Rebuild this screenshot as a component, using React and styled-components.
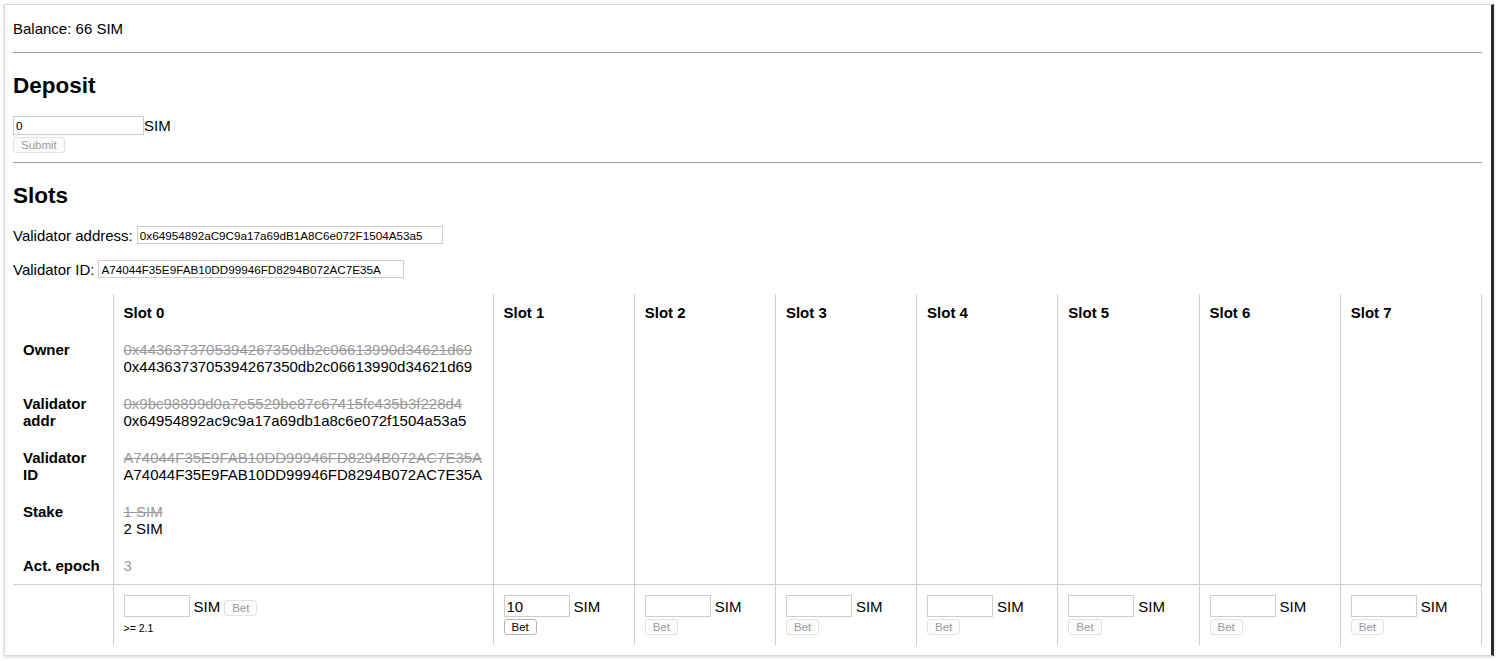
import React from "react";
import styled, { createGlobalStyle } from "styled-components";

const GlobalStyle = createGlobalStyle`
  html, body {
    margin: 0;
    padding: 0;
    background: #fff;
    overflow: hidden;
  }
  body {
    font-family: "Liberation Sans", Arial, Helvetica, sans-serif;
    font-size: 15px;
    line-height: 17px;
    color: #000;
  }
`;

const Janela = styled.div`
  box-sizing: border-box;
  margin: 4px;
  height: 652px;
  border: 1px solid #d9d9d9;
  border-right: 3px solid #2b2b2b;
  box-shadow: 0 1px 3px rgba(0, 0, 0, 0.18);
  background: #fff;
  padding: 15px 9px 0 8px;
  overflow: hidden;
`;

const Saldo = styled.p`
  margin: 0;
`;

const Divisor = styled.hr`
  height: 0;
  border: 0;
  border-top: 1px solid #9c9c9c;
  margin: ${(p) => p.$topo}px 0 0;
`;

const Titulo = styled.h2`
  margin: 20px 0 17px;
  font-size: 22.5px;
  line-height: 26px;
  font-weight: 700;
`;

const Campo = styled.input`
  box-sizing: border-box;
  width: ${(p) => p.$largura}px;
  height: ${(p) => p.$altura}px;
  margin: 0;
  padding: 0 2px;
  border: 1px solid #cdcdcd;
  border-radius: 0;
  background: #fff;
  font-family: "Liberation Sans", Arial, sans-serif;
  font-size: ${(p) => p.$fonte}px;
  color: #000;
  outline: none;
`;

const Botao = styled.button`
  box-sizing: border-box;
  height: 16px;
  margin: 0;
  padding: 0 7px;
  border: 1px solid ${(p) => (p.disabled ? "#e2e2e2" : "#b4b4b4")};
  border-radius: 3px;
  background: ${(p) => (p.disabled ? "#fcfcfc" : "#fff")};
  color: ${(p) => (p.disabled ? "#9a9a9a" : "#000")};
  font-family: "Liberation Sans", Arial, sans-serif;
  font-size: 11.5px;
  line-height: 14px;
`;

const LinhaDeposito = styled.div`
  display: flex;
  align-items: center;
  height: 19px;
`;

const LinhaBotao = styled.div`
  margin-top: 2px;
  display: flex;
`;

const LinhaCampo = styled.div`
  display: flex;
  align-items: center;
  gap: 4px;
  height: 18px;
  & + & {
    margin-top: 16px;
  }
`;

const Tabela = styled.table`
  width: 100%;
  margin-top: 16px;
  border-collapse: collapse;
  table-layout: fixed;
`;

const Celula = styled.td`
  box-sizing: border-box;
  padding: 10px;
  vertical-align: top;
  text-align: left;
  font-weight: ${(p) => (p.$negrito ? 700 : 400)};
  border-left: ${(p) => (p.$rotulo ? "none" : "1px solid #cfcfcf")};
  border-right: ${(p) => (p.$ultima ? "1px solid #cfcfcf" : "none")};
  border-top: ${(p) => (p.$rodape ? "1px solid #cfcfcf" : "none")};
  ${(p) => (p.$largura ? `width: ${p.$largura}px;` : "")}
`;

const Antigo = styled.div`
  color: #9a9a9a;
  text-decoration: ${(p) => (p.$riscado ? "line-through" : "none")};
`;

const Aposta = styled.div`
  display: flex;
  flex-wrap: wrap;
  align-items: baseline;
  column-gap: 4px;
  row-gap: 2px;
`;

const Dica = styled.div`
  margin-top: 5px;
  font-size: 10.5px;
  line-height: 13px;
`;

const linhas = [
  {
    rotulo: "Owner",
    antigo: "0x4436373705394267350db2c06613990d34621d69",
    novo: "0x4436373705394267350db2c06613990d34621d69",
  },
  {
    rotulo: "Validator addr",
    antigo: "0x9bc98899d0a7e5529be87c67415fc435b3f228d4",
    novo: "0x64954892ac9c9a17a69db1a8c6e072f1504a53a5",
  },
  {
    rotulo: "Validator ID",
    antigo: "A74044F35E9FAB10DD99946FD8294B072AC7E35A",
    novo: "A74044F35E9FAB10DD99946FD8294B072AC7E35A",
  },
  { rotulo: "Stake", antigo: "1 SIM", novo: "2 SIM" },
  { rotulo: "Act. epoch", antigo: "3", novo: null, semRisco: true },
];

const slots = [0, 1, 2, 3, 4, 5, 6, 7];
const valores = { 1: "10" };

export default function App() {
  return (
    <>
      <GlobalStyle />
      <Janela>
        <Saldo>Balance: 66 SIM</Saldo>
        <Divisor $topo={15} />
        <Titulo>Deposit</Titulo>
        <LinhaDeposito>
          <Campo $largura={131} $altura={19} $fonte={11.7} defaultValue="0" />
          SIM
        </LinhaDeposito>
        <LinhaBotao>
          <Botao disabled>Submit</Botao>
        </LinhaBotao>
        <Divisor $topo={9} />
        <Titulo>Slots</Titulo>
        <LinhaCampo>
          Validator address:
          <Campo
            $largura={306}
            $altura={18}
            $fonte={11.7}
            defaultValue="0x64954892aC9C9a17a69dB1A8C6e072F1504A53a5"
          />
        </LinhaCampo>
        <LinhaCampo>
          Validator ID:
          <Campo
            $largura={306}
            $altura={18}
            $fonte={11.7}
            defaultValue="A74044F35E9FAB10DD99946FD8294B072AC7E35A"
          />
        </LinhaCampo>
        <Tabela>
          <thead>
            <tr>
              <Celula as="th" $rotulo $largura={100} />
              {slots.map((s) => (
                <Celula
                  as="th"
                  key={s}
                  $negrito
                  $ultima={s === 7}
                  $largura={s === 0 ? 380 : undefined}
                >
                  Slot {s}
                </Celula>
              ))}
            </tr>
          </thead>
          <tbody>
            {linhas.map((l) => (
              <tr key={l.rotulo}>
                <Celula as="th" $rotulo $negrito>
                  {l.rotulo}
                </Celula>
                {slots.map((s) => (
                  <Celula key={s} $ultima={s === 7}>
                    {s === 0 && (
                      <>
                        <Antigo $riscado={!l.semRisco}>{l.antigo}</Antigo>
                        {l.novo && <div>{l.novo}</div>}
                      </>
                    )}
                  </Celula>
                ))}
              </tr>
            ))}
            <tr>
              <Celula $rotulo $rodape />
              {slots.map((s) => (
                <Celula key={s} $rodape $ultima={s === 7}>
                  <Aposta>
                    <Campo
                      $largura={66}
                      $altura={22}
                      $fonte={15}
                      defaultValue={valores[s] || ""}
                    />
                    SIM
                    <Botao disabled={!valores[s]}>Bet</Botao>
                  </Aposta>
                  {s === 0 && <Dica>&gt;= 2.1</Dica>}
                </Celula>
              ))}
            </tr>
          </tbody>
        </Tabela>
      </Janela>
    </>
  );
}
